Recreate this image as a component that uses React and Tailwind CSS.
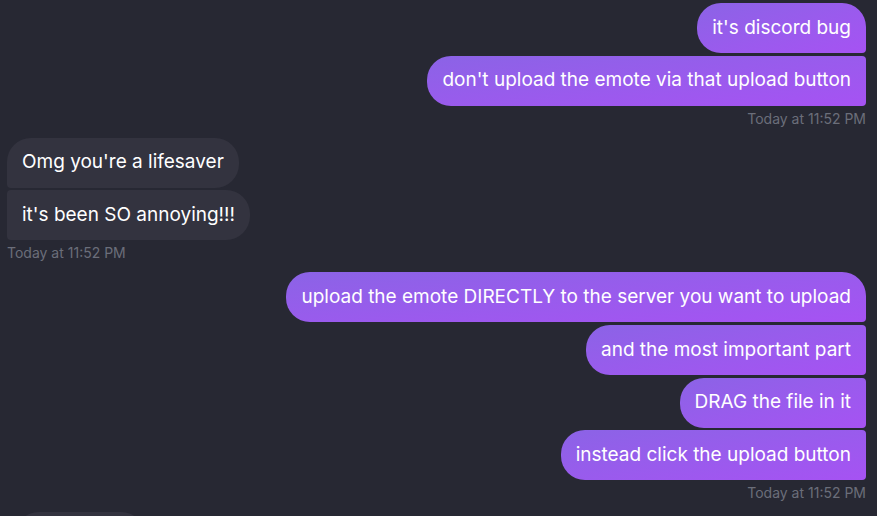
import React from "react";

const groups = [
  {
    mine: true,
    messages: ["it's discord bug", "don't upload the emote via that upload button"],
    time: "Today at 11:52 PM",
  },
  {
    mine: false,
    messages: ["Omg you're a lifesaver", "it's been SO annoying!!!"],
    time: "Today at 11:52 PM",
  },
  {
    mine: true,
    messages: [
      "upload the emote DIRECTLY to the server you want to upload",
      "and the most important part",
      "DRAG the file in it",
      "instead click the upload button",
    ],
    time: "Today at 11:52 PM",
  },
];

const Bubble = ({ text, mine, first }) => {
  if (mine) {
    return (
      <div
        className={`bg-gradient-to-br from-[#8b63e6] to-[#a652f3] text-white px-[15px] h-[50px] flex items-center text-[19px] rounded-l-[24px] rounded-br-[4px] ${
          first ? "rounded-tr-[24px]" : "rounded-tr-[4px]"
        }`}
      >
        {text}
      </div>
    );
  }
  return (
    <div
      className={`bg-[#33333f] text-white px-[15px] h-[50px] flex items-center text-[19px] rounded-r-[24px] rounded-bl-[4px] ${
        first ? "rounded-tl-[24px]" : "rounded-tl-[4px]"
      }`}
    >
      {text}
    </div>
  );
};

const App = () => {
  return (
    <div
      className="w-[877px] h-[516px] overflow-hidden bg-[#272833] pl-[7px] pr-[11px] pt-[3px]"
      style={{ fontFamily: '"Inter", "Noto Sans", sans-serif' }}
    >
      {groups.map((g, gi) => (
        <div key={gi} className={`flex flex-col ${g.mine ? "items-end" : "items-start"} mb-[11px]`}>
          <div className={`flex flex-col gap-[2.67px] ${g.mine ? "items-end" : "items-start"}`}>
            {g.messages.map((m, i) => (
              <Bubble key={i} text={m} mine={g.mine} first={i === 0} />
            ))}
          </div>
          <div className="text-[14px] text-[#6b6e7a] mt-[5px] leading-[16px]">{g.time}</div>
        </div>
      ))}
      <div className="ml-[8px] w-[130px] h-[50px] bg-[#33333f] rounded-[24px]"></div>
    </div>
  );
};

export default App;
